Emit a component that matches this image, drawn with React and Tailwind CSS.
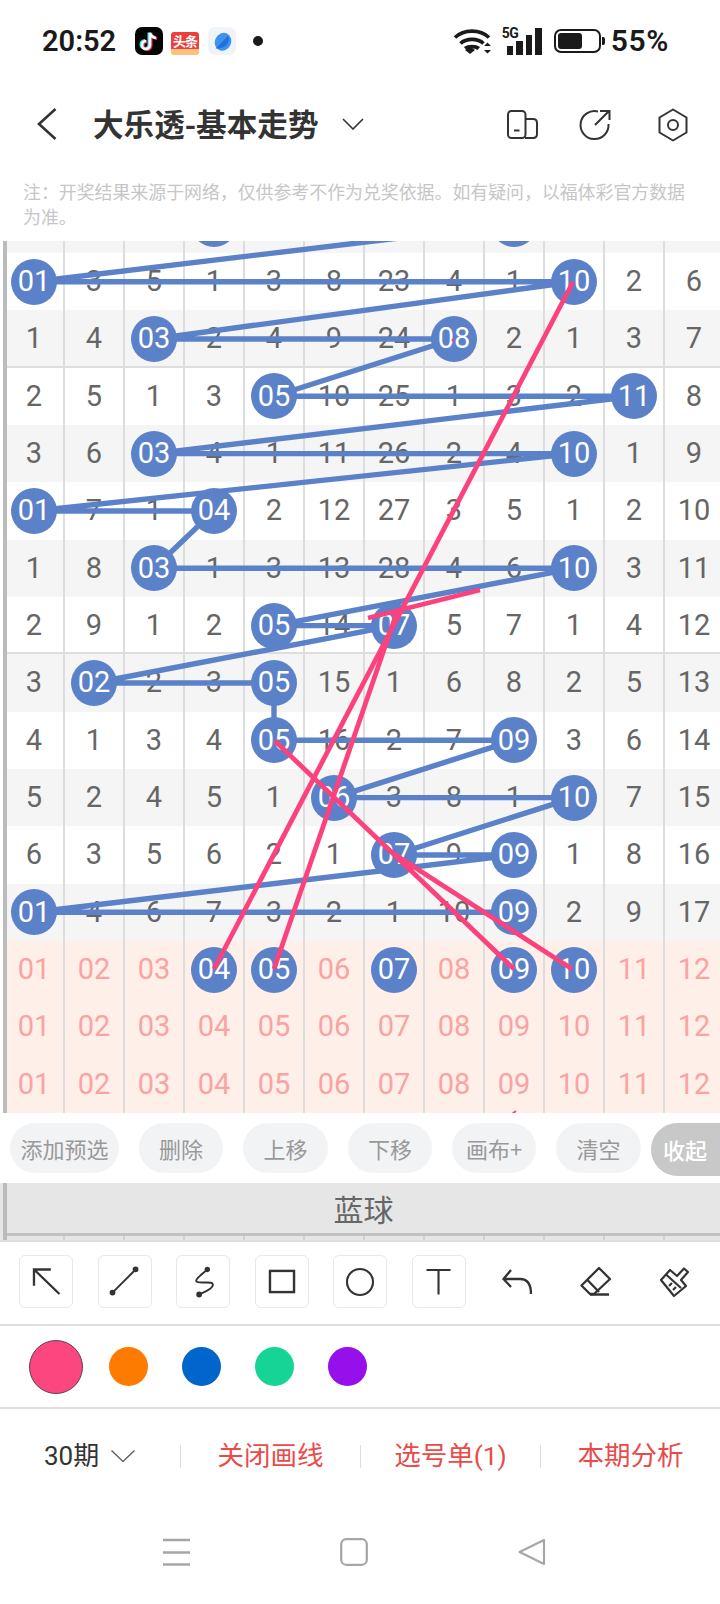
import React from 'react'

// 走势表数据: vals 是每格的数字, balls 是开奖号所在列
const rows = [
  { vals: ['', '', '', '', '', '', '', '', '', '', '', ''], balls: [3, 8] },
  { vals: ['01', '3', '5', '1', '3', '8', '23', '4', '1', '10', '2', '6'], balls: [0, 9] },
  { vals: ['1', '4', '03', '2', '4', '9', '24', '08', '2', '1', '3', '7'], balls: [2, 7] },
  { vals: ['2', '5', '1', '3', '05', '10', '25', '1', '3', '2', '11', '8'], balls: [4, 10] },
  { vals: ['3', '6', '03', '4', '1', '11', '26', '2', '4', '10', '1', '9'], balls: [2, 9] },
  { vals: ['01', '7', '1', '04', '2', '12', '27', '3', '5', '1', '2', '10'], balls: [0, 3] },
  { vals: ['1', '8', '03', '1', '3', '13', '28', '4', '6', '10', '3', '11'], balls: [2, 9] },
  { vals: ['2', '9', '1', '2', '05', '14', '07', '5', '7', '1', '4', '12'], balls: [4, 6] },
  { vals: ['3', '02', '2', '3', '05', '15', '1', '6', '8', '2', '5', '13'], balls: [1, 4] },
  { vals: ['4', '1', '3', '4', '05', '16', '2', '7', '09', '3', '6', '14'], balls: [4, 8] },
  { vals: ['5', '2', '4', '5', '1', '06', '3', '8', '1', '10', '7', '15'], balls: [5, 9] },
  { vals: ['6', '3', '5', '6', '2', '1', '07', '9', '09', '1', '8', '16'], balls: [6, 8] },
  { vals: ['01', '4', '6', '7', '3', '2', '1', '10', '09', '2', '9', '17'], balls: [0, 8] },
]

const picks = ['01', '02', '03', '04', '05', '06', '07', '08', '09', '10', '11', '12']
const pinkRows = [[3, 4, 6, 8, 9], [], []]

const rowH = 57.33
const colX = (c) => 34 + 60 * c
const rowY = (r) => 224.33 + rowH * r

// 蓝线: 按行依次连接每个号码, 同一行从右边的球接到下一行
const orderBalls = (row, i) => {
  if (i === 0) return [8]
  return row.balls
}
const bluePoints = rows
  .flatMap((row, i) => orderBalls(row, i).map((c) => `${colX(c)},${rowY(i).toFixed(1)}`))
  .join(' ')

const tools = ['arrow', 'line', 'curve', 'rect', 'circle', 'text']
const actions = [
  { label: '添加预选', w: 'w-[109px]' },
  { label: '删除', w: 'w-[84px]' },
  { label: '上移', w: 'w-[85px]' },
  { label: '下移', w: 'w-[84px]' },
  { label: '画布+', w: 'w-[84px]' },
  { label: '清空', w: 'w-[85px]' },
]
const colors = ['bg-[#ff7a00]', 'bg-[#0066cc]', 'bg-[#16d496]', 'bg-[#9510ea]']

function Ball({ children }) {
  return (
    <div className="relative z-20 flex h-[46px] w-[46px] shrink-0 items-center justify-center rounded-full bg-[#5b81c8] text-white">
      {children}
    </div>
  )
}

function Cell({ first, ball, value, pink }) {
  return (
    <div
      className={`flex h-full shrink-0 items-center justify-center border-r-2 border-[#dddddd] ${
        first ? 'w-[58px] pr-[2px]' : 'w-[60px]'
      } ${pink ? 'text-[#f9a3a3]' : 'text-[#666666]'}`}
    >
      {ball ? <Ball>{value}</Ball> : value}
    </div>
  )
}

function ToolIcon({ name }) {
  if (name === 'arrow')
    return (
      <svg viewBox="0 0 54 53" className="h-full w-full" fill="none" stroke="#333" strokeWidth="2.4">
        <path d="M14.5 31V14H32M14.5 14L41 39.5" />
      </svg>
    )
  if (name === 'line')
    return (
      <svg viewBox="0 0 54 53" className="h-full w-full" fill="#333" stroke="#333" strokeWidth="2">
        <path d="M14 38L38 14" />
        <circle cx="14" cy="38" r="2" />
        <circle cx="38" cy="14" r="2" />
      </svg>
    )
  if (name === 'curve')
    return (
      <svg viewBox="0 0 54 53" className="h-full w-full" fill="none" stroke="#333" strokeWidth="2">
        <path d="M31.5 14C26 19 17 25 21 27C26 29 39 25 37 31C36 35 27 38 23 40" />
        <circle cx="31.5" cy="14" r="1.8" fill="#333" />
        <circle cx="23" cy="40" r="2" fill="#333" />
      </svg>
    )
  if (name === 'rect')
    return (
      <svg viewBox="0 0 54 53" className="h-full w-full" fill="none" stroke="#333" strokeWidth="2.5">
        <rect x="14.5" y="15.5" width="25" height="22" />
      </svg>
    )
  if (name === 'circle')
    return (
      <svg viewBox="0 0 54 53" className="h-full w-full" fill="none" stroke="#333" strokeWidth="2.2">
        <circle cx="27" cy="27" r="13.5" />
      </svg>
    )
  return (
    <svg viewBox="0 0 54 53" className="h-full w-full" fill="none" stroke="#333" strokeWidth="2.2">
      <path d="M14 14.5H39M26.5 14.5V40" />
    </svg>
  )
}

function StatusBar() {
  return (
    <div className="flex h-[82px] items-center font-['Roboto','Noto_Sans_CJK_SC',sans-serif] text-[#1a1a1a]">
      <span className="ml-[42px] w-[76px] text-[29px] font-semibold leading-none">20:52</span>
      {/* 抖音 */}
      <svg viewBox="0 0 28 28" className="ml-[17px] h-[28px] w-[28px]">
        <rect width="28" height="28" rx="7" fill="#050505" />
        <path d="M15 6V18A4 4 0 1 1 11 14M15 6C16 9 18 10.5 21 11" fill="none" stroke="#25f4ee" strokeWidth="3" transform="translate(-1 -.6)" />
        <path d="M15 6V18A4 4 0 1 1 11 14M15 6C16 9 18 10.5 21 11" fill="none" stroke="#fe2c55" strokeWidth="3" transform="translate(1 .6)" />
        <path d="M15 6V18A4 4 0 1 1 11 14M15 6C16 9 18 10.5 21 11" fill="none" stroke="#ffffff" strokeWidth="2.6" />
      </svg>
      {/* 头条 */}
      <div className="ml-[8px] mt-[5px] flex h-[23px] w-[28px] flex-col overflow-hidden rounded-[3px]">
        <div className="flex h-[17px] items-center justify-center bg-[#ee3e3e] font-['Noto_Sans_CJK_SC',sans-serif] text-[13px] font-bold leading-none tracking-[-1px] text-white">
          头条
        </div>
        <div className="h-[6px] bg-[#f9c27d]" />
      </div>
      {/* 蓝色图标 */}
      <div className="ml-[9px] flex h-[28px] w-[28px] items-center justify-center rounded-[7px] bg-[#f0f3f7]">
        <svg viewBox="0 0 20 20" className="h-[23px] w-[23px]">
          <ellipse cx="10.5" cy="10" rx="7" ry="8" fill="#3f93f0" transform="rotate(25 10 10)" />
          <path d="M4 16L15 5C17 10 13 17 4 16Z" fill="#1f6fe0" />
        </svg>
      </div>
      <div className="ml-[17px] h-[10px] w-[10px] rounded-full bg-[#1a1a1a]" />

      {/* wifi */}
      <svg viewBox="0 0 40 28" className="ml-auto h-[28px] w-[40px]" fill="none" stroke="#1a1a1a" strokeWidth="3.6">
        <path d="M2 10.5C11 2 27 2 36 10.5" />
        <path d="M7.5 16.5C13 11 25 11 30.5 16.5" />
        <path d="M13 21.5C16 19 22 19 25 21.5" transform="translate(-2.5 0) scale(1.13 1)" />
        <path d="M14 24L19 20.5L24 24L19 28Z" fill="#1a1a1a" stroke="none" transform="translate(-2 -1)" />
        <path d="M31 19L34.5 15.5L38 19ZM31 23L34.5 26.5L38 23Z" fill="#1a1a1a" stroke="none" />
      </svg>
      {/* 5G 信号 */}
      <div className="relative ml-[9px] h-[28px] w-[40px]">
        <span className="absolute left-0 top-[-1px] font-['Roboto',sans-serif] text-[14px] font-bold leading-[14px] tracking-[-.5px]">5G</span>
        <div className="absolute bottom-0 right-0 flex items-end gap-[3px]">
          <div className="h-[9px] w-[6.5px] bg-[#1a1a1a]" />
          <div className="h-[14px] w-[6.5px] bg-[#1a1a1a]" />
          <div className="h-[20px] w-[6.5px] bg-[#1a1a1a]" />
          <div className="h-[27px] w-[6.5px] bg-[#1a1a1a]" />
        </div>
      </div>
      {/* 电量 */}
      <div className="ml-[12px] flex items-center">
        <div className="h-[24px] w-[47px] rounded-[7px] border-2 border-[#1a1a1a] p-[2px]">
          <div className="h-full w-[24px] rounded-[3px] bg-[#1a1a1a]" />
        </div>
        <div className="ml-[1px] h-[8px] w-[3px] rounded-r-[2px] bg-[#1a1a1a]" />
      </div>
      <span className="ml-[6px] mr-[51px] text-[30px] font-semibold leading-none tracking-[.6px]">55%</span>
    </div>
  )
}

function Header() {
  return (
    <div className="flex h-[83px] items-center">
      <svg viewBox="0 0 20 32" className="ml-[37px] h-[32px] w-[20px]" fill="none" stroke="#333" strokeWidth="2.6">
        <path d="M18.5 1L2 16L18.5 31" />
      </svg>
      <h1 className="ml-[36px] w-[224px] shrink-0 whitespace-nowrap font-['Noto_Sans_CJK_SC',sans-serif] text-[30.6px] font-bold leading-none text-[#333333]">
        大乐透-基本走势
      </h1>
      <svg viewBox="0 0 22 12" className="ml-[25px] h-[12px] w-[22px]" fill="none" stroke="#333" strokeWidth="1.6">
        <path d="M1 1L11 11L21 1" />
      </svg>
      <svg viewBox="505 108 36 34" className="ml-[140px] h-[34px] w-[36px]" fill="none" stroke="#333" strokeWidth="2">
        <rect x="509" y="112" width="17.5" height="27" rx="3.5" />
        <path d="M526.5 120H534Q538 120 538 124V135Q538 139 534 139H526" />
        <path d="M515 131.5H520.5" />
      </svg>
      <svg viewBox="578 106 36 36" className="ml-[37px] h-[36px] w-[36px]" fill="none" stroke="#333" strokeWidth="2">
        <path d="M599 111.5A14 14 0 1 0 609.5 124" />
        <path d="M596 125L610 111M601 111H610.5V120" />
      </svg>
      <svg viewBox="656 106 36 36" className="ml-[42px] h-[36px] w-[36px]" fill="none" stroke="#333" strokeWidth="2">
        <path d="M674 109.5L687.5 117.5V132.5L674 140.5L660.5 132.5V117.5Z" strokeLinejoin="round" />
        <circle cx="674" cy="125" r="5" />
      </svg>
    </div>
  )
}

function Chart() {
  return (
    <div className="relative h-[872px] overflow-hidden font-['Roboto',sans-serif] text-[29px] leading-none">
      <div className="-mt-[45.33px] ml-[3px] border-l-4 border-[#bbbbbb]">
        {rows.map((row, i) => (
          <div
            key={i}
            className={`flex h-[57.33px] ${i % 2 === 0 ? 'bg-[#f5f5f5]' : 'bg-white'} ${
              i === 2 || i === 7 ? 'shadow-[inset_0_-2px_0_#dddddd]' : ''
            }`}
          >
            {row.vals.map((v, c) => (
              <Cell key={c} first={c === 0} value={v} ball={row.balls.includes(c)} />
            ))}
          </div>
        ))}
        {pinkRows.map((balls, i) => (
          <div key={i} className="flex h-[57.33px] bg-[#ffefe9]">
            {picks.map((v, c) => (
              <Cell key={c} first={c === 0} value={v} pink ball={balls.includes(c)} />
            ))}
          </div>
        ))}
      </div>

      {/* 蓝色连线, 在数字之上, 球之下 */}
      <svg viewBox="0 241 720 872" className="absolute left-0 top-0 z-10 h-[872px] w-[720px]" fill="none">
        <polyline points={bluePoints} stroke="#5b81c8" strokeWidth="5.4" />
      </svg>

      {/* 用户画的线 */}
      <svg viewBox="0 241 720 872" className="absolute left-0 top-0 z-30 h-[872px] w-[720px]" fill="none" stroke="#fb427d" strokeWidth="4.8">
        <path d="M573 282L214 969" />
        <path d="M274 969L397 612" />
        <path d="M368 618L480 590" />
        <path d="M275 741L514 969" />
        <path d="M394 854L572 969" />
        <circle cx="453" cy="340" r="1.6" fill="#fb427d" stroke="none" />
        <path d="M516 1111L512 1114" strokeWidth="2" />
      </svg>
    </div>
  )
}

function ActionBar() {
  return (
    <div className="flex h-[70px] gap-[20px] pl-[10px] pt-[10px] font-['Noto_Sans_CJK_SC',sans-serif]">
      {actions.map((a) => (
        <div
          key={a.label}
          className={`flex h-[50px] shrink-0 items-center justify-center rounded-full bg-[#f2f3f5] text-[22px] text-[#999999] ${a.w}`}
        >
          {a.label}
        </div>
      ))}
      <div className="-ml-[10px] flex h-[53px] flex-1 items-center rounded-l-full bg-[#c8c8c8] pl-[12px] text-[22px] font-medium text-white">
        收起
      </div>
    </div>
  )
}

function BlueBand() {
  return (
    <div className="h-[57px] overflow-hidden bg-[#e6e6e6] pl-[3px]">
      <div className="h-full border-l-4 border-[#bbbbbb]">
        <div className="flex h-[50px] items-center justify-center font-['Noto_Sans_CJK_SC',sans-serif] text-[30px] text-[#666666]">
          蓝球
        </div>
        <div className="h-[3px] bg-[#c2c2c2]" />
        <div className="flex h-[4px]">
          {picks.map((p, c) => (
            <div key={p} className={`h-full shrink-0 border-r-2 border-[#d0d0d0] ${c === 0 ? 'w-[58px]' : 'w-[60px]'}`} />
          ))}
        </div>
      </div>
    </div>
  )
}

function DrawTools() {
  return (
    <div className="flex h-[86px] items-center border-y-2 border-[#dedede] pb-[3px] pl-[19px]">
      <div className="flex gap-[24.6px]">
        {tools.map((t) => (
          <div key={t} className="h-[53px] w-[54px] rounded-[6px] border border-[#e8e8e8]">
            <ToolIcon name={t} />
          </div>
        ))}
      </div>
      <svg viewBox="500 1265 34 34" className="ml-[34px] h-[34px] w-[34px]" fill="none" stroke="#333" strokeWidth="2.3">
        <path d="M511 1270L503.5 1279L511 1287M503.5 1279H520Q531 1279 531 1294" />
      </svg>
      <svg viewBox="578 1265 34 34" className="ml-[44px] h-[34px] w-[34px]" fill="none" stroke="#333" strokeWidth="2.3" strokeLinejoin="round">
        <path d="M599 1268L610 1279L594 1294H590L581.5 1285.5Z" />
        <path d="M587 1279.5L599 1292M590 1294.5H609" />
      </svg>
      <svg viewBox="656 1265 34 34" className="ml-[44px] h-[34px] w-[34px]" fill="none" stroke="#333" strokeWidth="2.2" strokeLinejoin="round">
        <path d="M661 1280L670 1270L677 1276L684 1268.5L688 1272L681 1280L686 1286L674 1296Z" />
        <path d="M666 1274.5L681 1288M669 1286L672 1283M673 1290L676 1287" />
      </svg>
    </div>
  )
}

function ColorPicker() {
  return (
    <div className="flex h-[83px] items-center gap-[34px] border-b-2 border-[#dedede] pl-[29px]">
      <div className="h-[54px] w-[54px] -mr-[8px] rounded-full border border-[#5a4552] bg-[#fc4680]" />
      {colors.map((c) => (
        <div key={c} className={`h-[39px] w-[39px] rounded-full ${c}`} />
      ))}
    </div>
  )
}

function Footer() {
  return (
    <div className="flex h-[94px] items-center font-['Roboto','Noto_Sans_CJK_SC',sans-serif] text-[26.5px]">
      <div className="flex w-[180px] items-center pl-[44px] text-[26px] text-[#333333]">
        <span>30期</span>
        <svg viewBox="0 0 24 12" className="ml-[12px] h-[12px] w-[24px]" fill="none" stroke="#555" strokeWidth="1.2">
          <path d="M.5 .5L12 11.5L23.5 .5" />
        </svg>
      </div>
      <div className="h-[23px] w-px bg-[#dddddd]" />
      <div className="flex-1 text-center text-[#e94b4b]">关闭画线</div>
      <div className="h-[23px] w-px bg-[#dddddd]" />
      <div className="flex-1 text-center text-[#e94b4b]">选号单(1)</div>
      <div className="h-[23px] w-px bg-[#dddddd]" />
      <div className="flex-1 text-center text-[#e94b4b]">本期分析</div>
    </div>
  )
}

function NavBar() {
  return (
    <div className="flex items-center pl-[162px] pt-[35px]">
      <svg viewBox="0 0 28 28" className="h-[28px] w-[28px]" fill="none" stroke="#a6a6a6" strokeWidth="2.6">
        <path d="M1 2H28M1 14.5H28M1 26.5H28" />
      </svg>
      <svg viewBox="0 0 28 28" className="ml-[150px] h-[28px] w-[28px]" fill="none" stroke="#a6a6a6" strokeWidth="2.2">
        <rect x="1.2" y="1.2" width="25.6" height="25.6" rx="5" />
      </svg>
      <svg viewBox="0 0 28 28" className="ml-[150px] h-[28px] w-[28px]" fill="none" stroke="#a6a6a6" strokeWidth="2.2" strokeLinejoin="round">
        <path d="M26 2V26L1.5 14Z" />
      </svg>
    </div>
  )
}

export default function App() {
  return (
    <div className="h-[1604px] w-[720px] overflow-hidden bg-white">
      <StatusBar />
      <Header />
      <div className="h-[76px] pl-[23px] pt-[14px]">
        <p className="w-[668px] font-['Noto_Sans_CJK_SC',sans-serif] text-[17.9px] leading-[25px] text-[#c6c6c6]">
          注：开奖结果来源于网络，仅供参考不作为兑奖依据。如有疑问，以福体彩官方数据为准。
        </p>
      </div>
      <Chart />
      <ActionBar />
      <BlueBand />
      <DrawTools />
      <ColorPicker />
      <Footer />
      <NavBar />
    </div>
  )
}
